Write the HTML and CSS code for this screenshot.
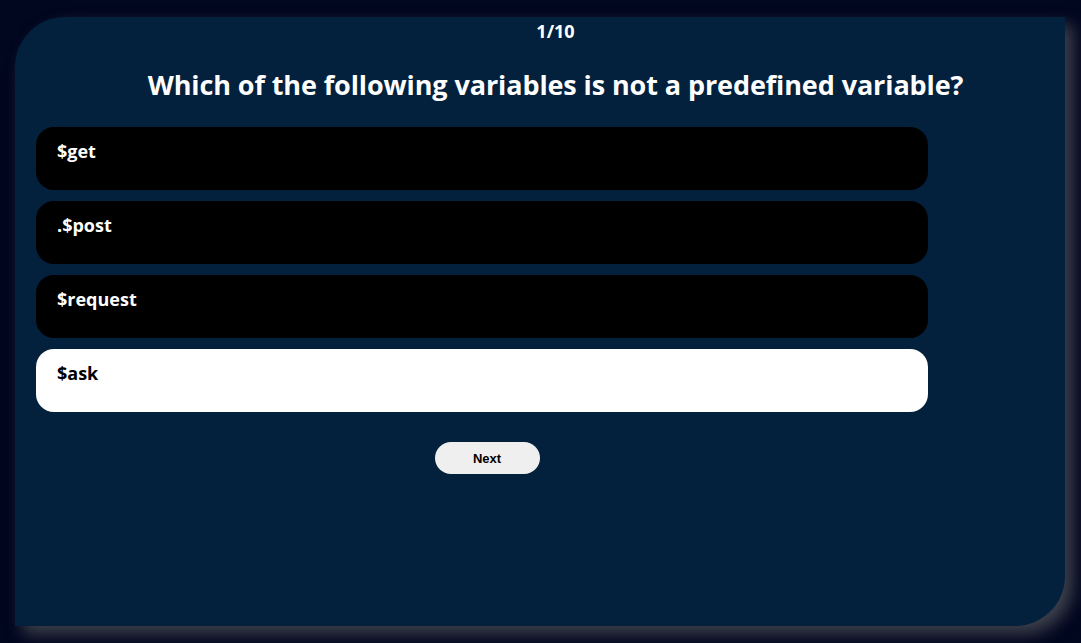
FILE: index.html
```html
<!DOCTYPE html>
<html>
<head>
<meta charset="utf-8">
<link rel="stylesheet" href="styles.css">
</head>
<body>
<div class="card">
  <div class="counter">1/10</div>
  <h1 class="question">Which of the following variables is not a predefined variable?</h1>
  <div class="options">
    <div class="option">$get</div>
    <div class="option">.$post</div>
    <div class="option">$request</div>
    <div class="option selected">$ask</div>
  </div>
  <div class="actions">
    <button class="next">Next</button>
  </div>
</div>
</body>
</html>
```

FILE: styles.css
```css
html, body {
  margin: 0;
  padding: 0;
}
body {
  background: #020720;
  width: 1081px;
  height: 643px;
  overflow: hidden;
  box-sizing: border-box;
  padding: 17px 16px 17px 15px;
  font-family: "Open Sans", "Noto Sans", sans-serif;
}
.card {
  width: 1050px;
  height: 609px;
  background: #03213d;
  border-radius: 50px 0 50px 0;
  box-shadow: 8px 8px 16px rgba(72, 74, 82, 0.85);
  box-sizing: border-box;
  padding: 2px 0 0 21px;
  display: flex;
  flex-direction: column;
}
.counter {
  color: #fff;
  font-weight: 700;
  font-size: 18px;
  line-height: 24px;
  text-align: center;
  padding-left: 10px;
}
.question {
  margin: 24px 0 0 0;
  color: #fff;
  font-weight: 700;
  font-size: 27px;
  line-height: 36px;
  text-align: center;
  padding-left: 10px;
  letter-spacing: -0.1px;
}
.options {
  margin-top: 24px;
  width: 892px;
  display: flex;
  flex-direction: column;
  gap: 11px;
}
.option {
  height: 63px;
  box-sizing: border-box;
  background: #000;
  color: #fff;
  border-radius: 18px;
  padding: 12px 21px;
  font-weight: 700;
  font-size: 18px;
  line-height: 24px;
}
.option.selected {
  background: #fff;
  color: #000;
}
.actions {
  width: 892px;
  display: flex;
  justify-content: center;
  margin-top: 30px;
}
.next {
  width: 105px;
  height: 32px;
  border: none;
  border-radius: 16px;
  background: #efefef;
  color: #000;
  font-family: "Liberation Sans", Arial, sans-serif;
  font-weight: 700;
  font-size: 13px;
  margin-left: 10px;
  padding: 0;
}
```
